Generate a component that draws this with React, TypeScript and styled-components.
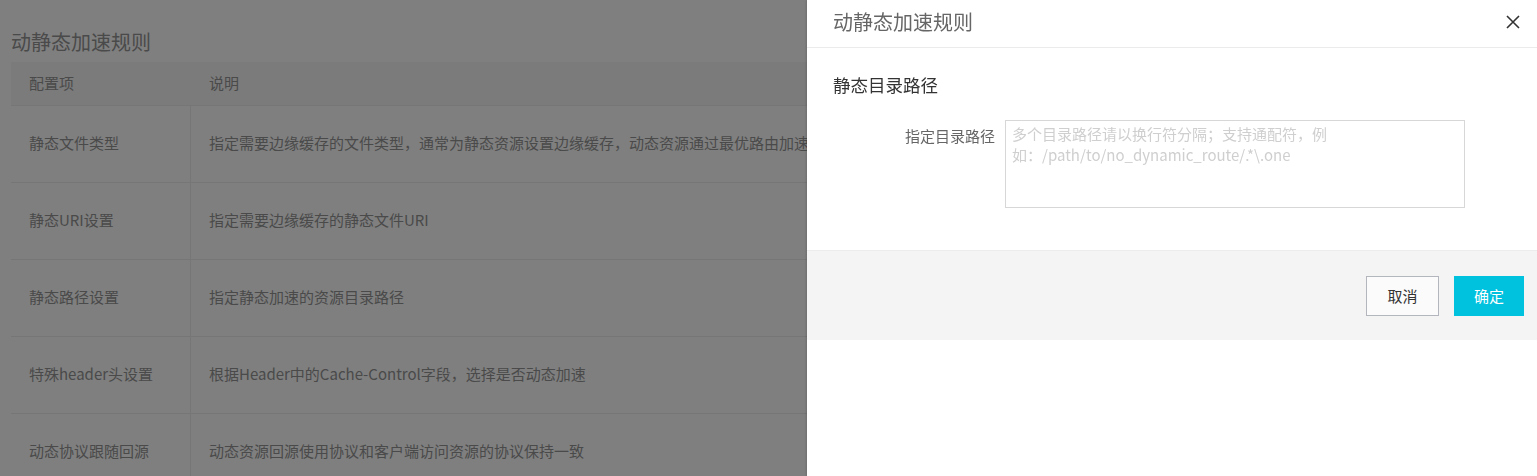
import React from "react";
import styled, { createGlobalStyle } from "styled-components";

const GlobalStyle = createGlobalStyle`
  html, body { margin: 0; padding: 0; background: #fff; }
  body {
    font-family: "Noto Sans CJK SC", "Noto Sans", sans-serif;
    overflow: hidden;
  }
  * { box-sizing: border-box; }
`;

const Page = styled.div`
  width: 1537px;
  height: 476px;
  padding: 28px 0 0 11px;
  background: #fff;
`;

const PageTitle = styled.h2`
  margin: 0 0 6px;
  font-size: 20px;
  font-weight: 400;
  line-height: 28px;
  color: #949494;
`;

const Table = styled.div`
  width: 1400px;
  display: grid;
  grid-template-columns: 180px 1fr;
  font-size: 15px;
  color: #949494;
`;

const HeadCell = styled.div`
  height: 44px;
  display: flex;
  align-items: center;
  padding-left: 18px;
  padding-bottom: 2px;
  background: #f6f6f6;
  border-bottom: 1px solid #ececec;
`;

const Cell = styled.div<{ $first?: boolean }>`
  height: 77px;
  display: flex;
  align-items: center;
  padding-left: 18px;
  padding-bottom: 3px;
  border-bottom: 1px solid #ececec;
  border-right: ${(p) => (p.$first ? "1px solid #ececec" : "none")};
  white-space: nowrap;
`;

const Mask = styled.div`
  position: fixed;
  inset: 0;
  background: rgba(0, 0, 0, 0.5);
`;

const Drawer = styled.aside`
  position: fixed;
  top: 0;
  right: 0;
  width: 730px;
  height: 100%;
  background: #fff;
  box-shadow: -1px 0 2px rgba(0, 0, 0, 0.15);
  display: flex;
  flex-direction: column;
`;

const DrawerHeader = styled.div`
  height: 48px;
  display: flex;
  align-items: center;
  justify-content: space-between;
  padding: 0 12px 3px 26px;
  border-bottom: 1px solid #ebebeb;
`;

const DrawerTitle = styled.div`
  font-size: 20px;
  color: #666;
  line-height: 28px;
`;

const CloseBtn = styled.button`
  width: 24px;
  height: 24px;
  padding: 0;
  border: none;
  background: none;
  display: flex;
  align-items: center;
  justify-content: center;
  cursor: pointer;
`;

const DrawerBody = styled.div`
  padding: 24px 26px 42px 26px;
`;

const SectionTitle = styled.div`
  font-size: 17.5px;
  color: #333;
  line-height: 26px;
  margin-bottom: 22px;
`;

const FormRow = styled.div`
  display: flex;
  align-items: flex-start;
`;

const Label = styled.label`
  width: 172px;
  text-align: right;
  padding-right: 10px;
  padding-top: 5px;
  font-size: 15px;
  line-height: 21px;
  color: #666;
`;

const TextArea = styled.textarea`
  width: 460px;
  height: 88px;
  border: 1px solid #d7d7d7;
  padding: 2px 6px;
  font-family: "Noto Sans CJK SC", "Noto Sans", sans-serif;
  font-size: 15px;
  line-height: 21px;
  color: #333;
  resize: none;
  outline: none;
  &::placeholder { color: #cfcfcf; }
`;

const Footer = styled.div`
  height: 90px;
  background: #f4f4f4;
  border-top: 1px solid #ececec;
  display: flex;
  align-items: center;
  justify-content: flex-end;
  gap: 15px;
  padding: 0 13px 0 0;
`;

const Button = styled.button<{ $primary?: boolean }>`
  height: 40px;
  padding: 0;
  width: ${(p) => (p.$primary ? "70px" : "73px")};
  font-family: "Noto Sans CJK SC", "Noto Sans", sans-serif;
  font-size: 15px;
  border: 1px solid ${(p) => (p.$primary ? "#00c1de" : "#b3b6bd")};
  background: ${(p) => (p.$primary ? "#00c1de" : "#fbfbfb")};
  color: ${(p) => (p.$primary ? "#fff" : "#333")};
  cursor: pointer;
`;

const rows: [string, string][] = [
  ["静态文件类型", "指定需要边缘缓存的文件类型，通常为静态资源设置边缘缓存，动态资源通过最优路由加速回源"],
  ["静态URI设置", "指定需要边缘缓存的静态文件URI"],
  ["静态路径设置", "指定静态加速的资源目录路径"],
  ["特殊header头设置", "根据Header中的Cache-Control字段，选择是否动态加速"],
  ["动态协议跟随回源", "动态资源回源使用协议和客户端访问资源的协议保持一致"],
];

export default function App() {
  return (
    <>
      <GlobalStyle />
      <Page>
        <PageTitle>动静态加速规则</PageTitle>
        <Table>
          <HeadCell>配置项</HeadCell>
          <HeadCell>说明</HeadCell>
          {rows.map(([a, b]) => (
            <React.Fragment key={a}>
              <Cell $first>{a}</Cell>
              <Cell>{b}</Cell>
            </React.Fragment>
          ))}
        </Table>
      </Page>
      <Mask />
      <Drawer>
        <DrawerHeader>
          <DrawerTitle>动静态加速规则</DrawerTitle>
          <CloseBtn aria-label="关闭">
            <svg width="14" height="14" viewBox="0 0 14 14">
              <path d="M1 1L13 13M13 1L1 13" stroke="#333" strokeWidth="1.6" />
            </svg>
          </CloseBtn>
        </DrawerHeader>
        <DrawerBody>
          <SectionTitle>静态目录路径</SectionTitle>
          <FormRow>
            <Label>指定目录路径</Label>
            <TextArea placeholder={"多个目录路径请以换行符分隔；支持通配符，例如：/path/to/no_dynamic_route/.*\\.one"} />
          </FormRow>
        </DrawerBody>
        <Footer>
          <Button>取消</Button>
          <Button $primary>确定</Button>
        </Footer>
      </Drawer>
    </>
  );
}
